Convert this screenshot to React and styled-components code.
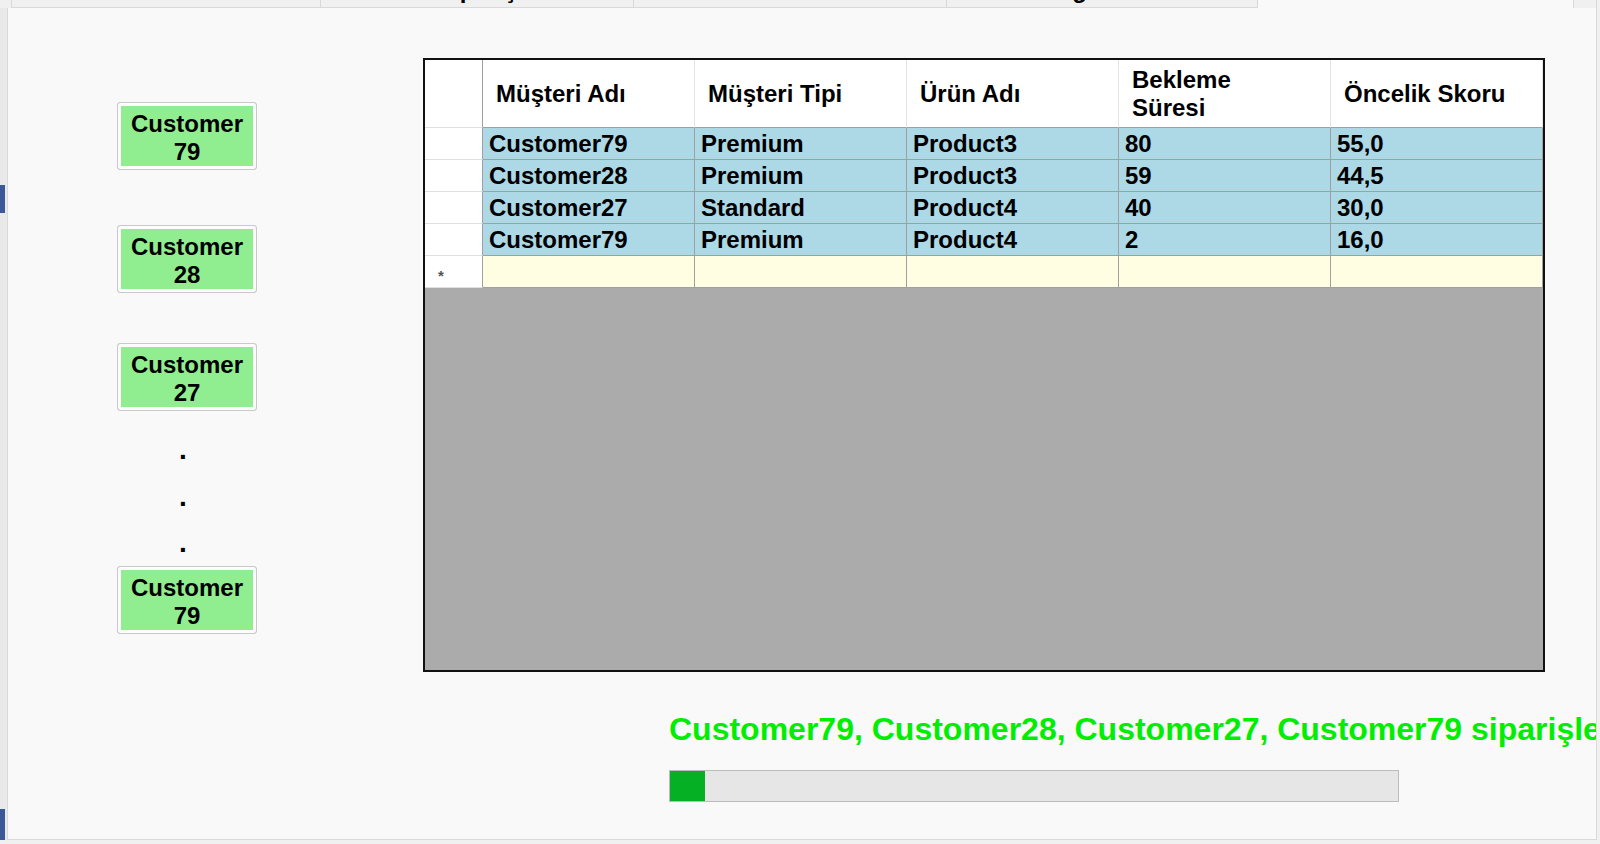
import React from 'react';
import styled, { createGlobalStyle } from 'styled-components';

const GlobalStyle = createGlobalStyle`
  html, body { margin: 0; padding: 0; background: #f0f0f0; }
  body { font-family: "Liberation Sans", Arial, sans-serif; }
  * { box-sizing: border-box; }
`;

const Window = styled.div`
  width: 1600px;
  height: 844px;
  display: flex;
  flex-direction: column;
  overflow: hidden;
  background: #f0f0f0;
`;

const TabStrip = styled.div`
  display: flex;
  height: 8px;
  flex-shrink: 0;
`;

const TabLead = styled.div`
  width: 11px;
  flex-shrink: 0;
  background: #f0f0f0;
`;

const Tab = styled.div`
  width: ${(p) => p.$w}px;
  flex-shrink: 0;
  overflow: hidden;
  display: flex;
  justify-content: center;
  align-items: flex-start;
  background: ${(p) => (p.$active ? '#f9f9f9' : '#f0f0f0')};
  border-left: ${(p) => (p.$first ? '1px solid #d9d9d9' : 'none')};
  border-right: 1px solid #d9d9d9;
  border-bottom: ${(p) => (p.$active ? 'none' : '1px solid #d9d9d9')};
`;

const TabLabel = styled.span`
  font-size: 24px;
  font-weight: 700;
  line-height: 24px;
  margin-top: -22px;
  white-space: nowrap;
  color: #000;
`;

const TabTail = styled.div`
  flex: 1;
  margin-right: 3px;
  background: #f0f0f0;
  border-right: 1px solid #d9d9d9;
`;

const Main = styled.div`
  flex: 1;
  display: flex;
  padding: 0 3px 4px 0;
  min-height: 0;
`;

const Gutter = styled.div`
  width: 7px;
  flex-shrink: 0;
  display: flex;
  flex-direction: column;
  background: #e9e9e9;
`;

const Chip = styled.div`
  width: 5px;
  height: ${(p) => p.$h}px;
  margin-top: ${(p) => p.$mt}px;
  background: ${(p) => p.$c || '#3b5998'};
`;

const Panel = styled.div`
  flex: 1;
  display: flex;
  align-items: flex-start;
  overflow: hidden;
  background: #f9f9f9;
  border: 1px solid #dadada;
  border-top: none;
`;

const QueueColumn = styled.div`
  width: 140px;
  margin-left: 109px;
  padding-top: 94px;
  display: flex;
  flex-direction: column;
  flex-shrink: 0;
`;

const CustomerButton = styled.button`
  width: 140px;
  height: 68px;
  margin: ${(p) => p.$mt}px 0 0 0;
  padding: 3px 4px 0;
  border: 1px solid #c9c9c9;
  border-radius: 3px;
  background: #90ee90;
  box-shadow: inset 0 0 0 3px #fdfdfd;
  font-family: "Liberation Sans", Arial, sans-serif;
  font-weight: 700;
  font-size: 24px;
  line-height: 28px;
  color: #000;
  text-align: center;
`;

const DotLabel = styled.div`
  height: 20px;
  margin-top: ${(p) => p.$mt}px;
  padding-left: 62px;
  font-weight: 700;
  font-size: 28px;
  line-height: 20px;
  color: #000;
`;

const RightColumn = styled.div`
  width: 1122px;
  margin-left: 166px;
  padding-top: 50px;
  display: flex;
  flex-direction: column;
  flex-shrink: 0;
`;

const Grid = styled.div`
  width: 1122px;
  height: 614px;
  border: 2px solid #111;
  background: #ababab;
  display: flex;
  flex-direction: column;
`;

const GridRow = styled.div`
  display: grid;
  grid-template-columns: 58px repeat(5, 212px);
  height: ${(p) => p.$h}px;
  flex-shrink: 0;
`;

const CornerCell = styled.div`
  background: #fff;
  border-right: 1px solid #a0a0a0;
  border-bottom: 1px solid #e0e0e0;
`;

const HeaderCell = styled.div`
  background: #fff;
  border-right: 1px solid #e4e4e4;
  border-bottom: 1px solid #a0a0a0;
  display: flex;
  align-items: center;
  padding: 0 30px 0 13px;
  font-weight: 700;
  font-size: 24px;
  line-height: 28px;
  color: #000;
`;

const RowHeadCell = styled.div`
  background: #fff;
  border-right: 1px solid #a0a0a0;
  border-bottom: 1px solid #e0e0e0;
  padding: 7px 0 0 13px;
  display: flex;
  align-items: center;
  font-size: 15px;
  font-weight: 700;
  color: #555;
`;

const DataCell = styled.div`
  background: ${(p) => (p.$new ? '#fffde2' : '#add8e6')};
  border-right: 1px solid #a0a0a0;
  border-bottom: 1px solid #a0a0a0;
  padding-left: 6px;
  display: flex;
  align-items: center;
  font-weight: 700;
  font-size: 24px;
  white-space: nowrap;
  overflow: hidden;
  color: #000;
`;

const StatusText = styled.div`
  margin: 38px 0 0 246px;
  font-weight: 700;
  font-size: 32px;
  line-height: 38px;
  color: #00ee00;
  white-space: nowrap;
`;

const ProgressTrack = styled.div`
  width: 730px;
  height: 32px;
  margin: 22px 0 0 246px;
  border: 1px solid #bcbcbc;
  background: #e6e6e6;
`;

const ProgressFill = styled.div`
  height: 100%;
  background: #06b025;
`;

const tabs = [
  { label: 'Ürün Listesi', w: 310 },
  { label: 'Sipariş', w: 313 },
  { label: 'Stok Durumu', w: 313 },
  { label: 'Log Takibi', w: 311 },
  { label: 'Admin Paneli', w: 316, active: true },
];

const queue = [
  { name: 'Customer 79', mt: 0 },
  { name: 'Customer 28', mt: 55 },
  { name: 'Customer 27', mt: 50 },
];

const columns = ['Müşteri Adı', 'Müşteri Tipi', 'Ürün Adı', 'Bekleme Süresi', 'Öncelik Skoru'];

const rows = [
  ['Customer79', 'Premium', 'Product3', '80', '55,0'],
  ['Customer28', 'Premium', 'Product3', '59', '44,5'],
  ['Customer27', 'Standard', 'Product4', '40', '30,0'],
  ['Customer79', 'Premium', 'Product4', '2', '16,0'],
];

const progress = { value: 1, max: 21 };

export default function App() {
  return (
    <>
      <GlobalStyle />
      <Window>
        <TabStrip>
          <TabLead />
          {tabs.map((t, i) => (
            <Tab key={t.label} $w={t.w} $active={t.active} $first={i === 0}>
              {!t.active && <TabLabel>{t.label}</TabLabel>}
            </Tab>
          ))}
          <TabTail />
        </TabStrip>
        <Main>
          <Gutter>
            <Chip $mt={177} $h={37} />
            <Chip $mt={596} $h={40} />
          </Gutter>
          <Panel>
            <QueueColumn>
              {queue.map((q, i) => (
                <CustomerButton key={i} $mt={q.mt}>{q.name}</CustomerButton>
              ))}
              <DotLabel $mt={29}>.</DotLabel>
              <DotLabel $mt={27}>.</DotLabel>
              <DotLabel $mt={26}>.</DotLabel>
              <CustomerButton $mt={13}>Customer 79</CustomerButton>
            </QueueColumn>
            <RightColumn>
              <Grid>
                <GridRow $h={68}>
                  <CornerCell />
                  {columns.map((c) => (
                    <HeaderCell key={c}>{c}</HeaderCell>
                  ))}
                </GridRow>
                {rows.map((r, i) => (
                  <GridRow key={i} $h={32}>
                    <RowHeadCell />
                    {r.map((v, j) => (
                      <DataCell key={j}>{v}</DataCell>
                    ))}
                  </GridRow>
                ))}
                <GridRow $h={32}>
                  <RowHeadCell>*</RowHeadCell>
                  {columns.map((c) => (
                    <DataCell key={c} $new />
                  ))}
                </GridRow>
              </Grid>
              <StatusText>
                Customer79, Customer28, Customer27, Customer79 siparişleri işleniyor...
              </StatusText>
              <ProgressTrack>
                <ProgressFill style={{ width: `${(progress.value / progress.max) * 100}%` }} />
              </ProgressTrack>
            </RightColumn>
          </Panel>
        </Main>
      </Window>
    </>
  );
}
